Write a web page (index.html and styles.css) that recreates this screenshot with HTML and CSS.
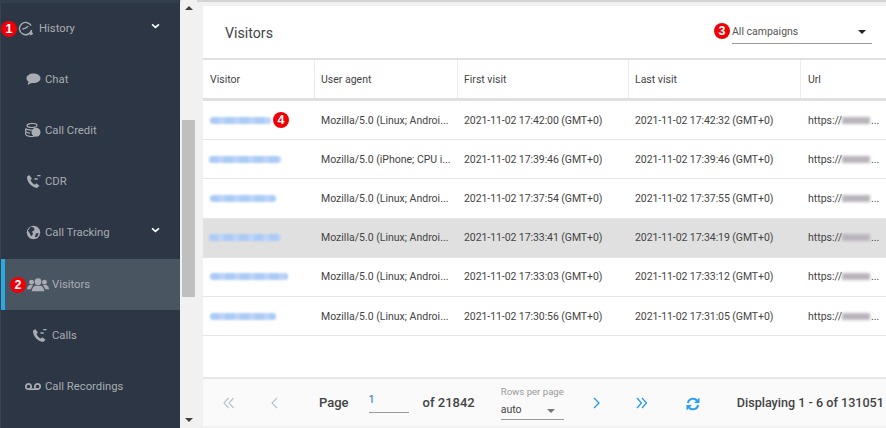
FILE: index.html
```html
<!DOCTYPE html>
<html lang="en">
<head>
<meta charset="utf-8">
<title>Visitors</title>
<link rel="stylesheet" href="styles.css">
</head>
<body>
<div class="app">
  <nav class="sidebar">
    <a class="item lvl0"><svg class="ico" viewBox="0 0 16 16"><path d="M14.6 9.6A6.6 6.6 0 1 1 14 5" fill="none" stroke="currentColor" stroke-width="1.5"/><path d="M4.6 8.6 8 7.6l3-2" fill="none" stroke="currentColor" stroke-width="1.4"/><path d="M11 13.5h4.2M13 11l2.500 2.500-2.500 1.500" fill="none" stroke="currentColor" stroke-width="1.2"/></svg><span>History</span><svg class="chev" viewBox="0 0 10 7"><path d="M1 1.500 5 5.200 9 1.500" fill="none" stroke="#fff" stroke-width="2"/></svg><b class="badge b1">1</b></a>
    <a class="item lvl1"><svg class="ico" viewBox="0 0 15 14"><path d="M7.500 1C11.400 1 14.500 3.100 14.500 5.800S11.400 10.600 7.500 10.600C6.800 10.600 6.200 10.500 5.600 10.400L1.500 12.600 2.600 9.300C1.300 8.400.5 7.200.5 5.800.5 3.100 3.600 1 7.500 1Z" fill="currentColor"/></svg><span>Chat</span></a>
    <a class="item lvl1"><svg class="ico big" viewBox="0 0 16 15"><g fill="none" stroke="currentColor" stroke-width="1.200"><ellipse cx="7" cy="2.500" rx="5" ry="2"/><path d="M1 5.600C2 7 6 7.300 7 7M1 8.700c1 1.200 3 1.500 4 1.500M1 11.800c1 1.500 6 2 8 1.500M1 5.600C.4 6.700.4 7.600 1 8.700.4 9.700.4 10.800 1 11.800"/></g><circle cx="11" cy="9.300" r="4.500" fill="currentColor"/></svg><span>Call Credit</span></a>
    <a class="item lvl1"><svg class="ico" viewBox="0 0 16 16"><path d="M3.400 1 1 3c0 6 5 11 10.900 12l2.400-2.600-3.300-2.500-1.700 1.500C7.300 10.400 5.700 8.600 4.800 6.400l1.500-1.600Z" fill="currentColor"/><path d="M9 5.300h3.500M12 1.800h3.500" stroke="currentColor" stroke-width="1.400"/></svg><span>CDR</span></a>
    <a class="item lvl1 tracking"><svg class="ico" viewBox="0 0 16 16"><circle cx="8" cy="8" r="7.200" fill="currentColor"/><path d="M5 1.600 8.500 3 9 5.500 6.500 7 7.500 9.500 5.500 12 3.500 8 2 6ZM10.500 9l3-.5-1.500 4-2.500.5Z" fill="#2c3644"/></svg><span>Call Tracking</span><svg class="chev" viewBox="0 0 10 7"><path d="M1 1.500 5 5.200 9 1.500" fill="none" stroke="#fff" stroke-width="2"/></svg></a>
    <a class="item lvl2 active"><svg class="ico wide" viewBox="0 0 21 13"><g fill="currentColor"><circle cx="10.500" cy="3.300" r="3.200"/><path d="M4.500 12.500c.3-3 2-5 3.500-5.300h5c1.500.3 3.200 2.300 3.500 5.300Z"/><circle cx="4.300" cy="3.800" r="2.300"/><circle cx="16.700" cy="3.800" r="2.300"/><path d="M0 10.500c.2-2.200 1.400-3.700 2.500-4h3.200L3.500 10.500ZM21 10.500c-.2-2.200-1.400-3.700-2.500-4h-3.200l2.200 4Z"/></g></svg><span>Visitors</span><b class="badge b2">2</b></a>
    <a class="item lvl2"><svg class="ico" viewBox="0 0 16 16"><path d="M3.400 1 1 3c0 6 5 11 10.900 12l2.400-2.600-3.300-2.500-1.700 1.500C7.300 10.400 5.700 8.600 4.800 6.400l1.500-1.600Z" fill="currentColor"/><path d="M9 5.300h3.500M12 1.800h3.500" stroke="currentColor" stroke-width="1.400"/></svg><span>Calls</span></a>
    <a class="item lvl1"><svg class="ico big" viewBox="0 0 16 8"><g fill="none" stroke="currentColor" stroke-width="1.700"><circle cx="3.500" cy="4" r="2.700"/><circle cx="12.500" cy="4" r="2.700"/><path d="M3.500 6.700h9"/></g></svg><span>Call Recordings</span></a>
  </nav>
  <div class="scrollbar">
    <i class="arrow up"></i>
    <div class="track"><div class="thumb"></div></div>
    <i class="arrow down"></i>
  </div>
  <main class="panel">
    <header class="head">
      <h1>Visitors</h1>
      <div class="select"><span>All campaigns</span><i class="caret"></i><b class="badge b3">3</b></div>
    </header>
    <div class="row hdr">
      <div>Visitor</div><div>User agent</div><div>First visit</div><div>Last visit</div><div>Url</div>
    </div>
    <div class="row"><div><span class="redact w1"></span><b class="badge b4">4</b></div><div>Mozilla/5.0 (Linux; Androi...</div><div>2021-11-02 17:42:00 (GMT+0)</div><div>2021-11-02 17:42:32 (GMT+0)</div><div class="url">https://<span class="smear"></span>...</div></div>
    <div class="row"><div><span class="redact w2"></span></div><div>Mozilla/5.0 (iPhone; CPU i...</div><div>2021-11-02 17:39:46 (GMT+0)</div><div>2021-11-02 17:39:46 (GMT+0)</div><div class="url">https://<span class="smear"></span>...</div></div>
    <div class="row"><div><span class="redact w3"></span></div><div>Mozilla/5.0 (Linux; Androi...</div><div>2021-11-02 17:37:54 (GMT+0)</div><div>2021-11-02 17:37:55 (GMT+0)</div><div class="url">https://<span class="smear"></span>...</div></div>
    <div class="row sel"><div><span class="redact w2"></span></div><div>Mozilla/5.0 (Linux; Androi...</div><div>2021-11-02 17:33:41 (GMT+0)</div><div>2021-11-02 17:34:19 (GMT+0)</div><div class="url">https://<span class="smear"></span>...</div></div>
    <div class="row"><div><span class="redact w4"></span></div><div>Mozilla/5.0 (Linux; Androi...</div><div>2021-11-02 17:33:03 (GMT+0)</div><div>2021-11-02 17:33:12 (GMT+0)</div><div class="url">https://<span class="smear"></span>...</div></div>
    <div class="row"><div><span class="redact w3"></span></div><div>Mozilla/5.0 (Linux; Androi...</div><div>2021-11-02 17:30:56 (GMT+0)</div><div>2021-11-02 17:31:05 (GMT+0)</div><div class="url">https://<span class="smear"></span>...</div></div>
    <div class="spacer"></div>
    <footer class="pager">
      <svg class="pg first" viewBox="0 0 12 12"><path d="M5.500 1 1 6l4.500 5M10.500 1 6 6l4.500 5" fill="none" stroke="#bcc2c8" stroke-width="1.200"/></svg>
      <svg class="pg prev" viewBox="0 0 7 12"><path d="M6 1 1 6l5 5" fill="none" stroke="#bcc2c8" stroke-width="1.200"/></svg>
      <strong class="page-label">Page</strong>
      <span class="page-input">1</span>
      <strong class="page-of">of 21842</strong>
      <div class="rows">
        <label>Rows per page</label>
        <div class="rows-val"><span>auto</span><i class="caret grey"></i></div>
      </div>
      <svg class="pg next" viewBox="0 0 7 12"><path d="M1 1l5 5-5 5" fill="none" stroke="#2196f3" stroke-width="1.300"/></svg>
      <svg class="pg last" viewBox="0 0 12 12"><path d="M1 1l4.500 5L1 11M6 1l4.500 5L6 11" fill="none" stroke="#2196f3" stroke-width="1.200"/></svg>
      <svg class="refresh" viewBox="0 0 14 14"><g fill="none" stroke="#29a0f0" stroke-width="2"><path d="M1.800 6A5.300 5.300 0 0 1 11 3.500"/><path d="M12.200 8A5.300 5.300 0 0 1 3 10.500"/></g><path d="M13.500.5V6H8ZM.5 13.500V8H6Z" fill="#29a0f0"/></svg>
      <strong class="display">Displaying 1 - 6 of 131051</strong>
    </footer>
  </main>
</div>
</body>
</html>
```

FILE: styles.css
```css
* { box-sizing: border-box; }
html, body { margin: 0; height: 100%; overflow: hidden; }
body { font-family: Roboto, "Liberation Sans", sans-serif; background: #f1f1f1; color: #444; }
.app { display: flex; width: 886px; height: 428px; border-top: 2px solid #d4d4d4; }

.sidebar { width: 180px; flex: none; margin-top: -2px; background: #2c3644; border-left: 1px solid #3a4250; border-top: 3px solid #333e4c; display: flex; flex-direction: column; }
.item { position: relative; display: flex; align-items: center; height: 51px; color: #a9adb3; font-size: 11.3px; flex: none; }
.item:nth-child(6) { margin-top: 1px; }
.item span { line-height: 14px; }
.tracking span { margin-top: 1px; }
.lvl0 { padding-left: 17px; }
.lvl1 { padding-left: 24px; }
.lvl2 { padding-left: 30px; }
.ico { width: 15px; height: 15px; margin: 0 4px 0 1px; flex: none; }
.ico.big { width: 16px; margin: 0 4px 0 0; }
.lvl0 .ico { margin: 0 6px 0 0; }
.lvl2 .ico { margin: 0 5px 0 1px; }
.lvl2 .ico.wide { width: 22px; height: 14px; margin: 0 3px 0 -4px; }
.chev { position: absolute; left: 150px; top: 20px; width: 9px; height: 6px; }
.active { background: #4a5562; border-left: 4px solid #29abe2; padding-left: 26px; }

.badge { position: absolute; z-index: 2; width: 16px; height: 16px; border-radius: 50%; background: #f00006; color: #fff; font: 700 12.500px/16px "Liberation Sans", sans-serif; text-align: center; }
.b1 { left: 0; top: 18px; }
.b2 { left: 5px; top: 18px; }
.b3 { left: -18px; top: 0; }
.b4 { left: 70px; top: -5px; }

.scrollbar { width: 16px; margin: -2px 0 0 1px; flex: none; background: #f1f1f1; display: flex; flex-direction: column; align-items: center; }
.track { flex: 1; width: 100%; padding-top: 104px; }
.thumb { width: 13px; height: 177px; margin-left: 1px; background: #bfbfbf; }
.arrow { width: 0; height: 0; border-left: 4px solid transparent; border-right: 4px solid transparent; margin: 6px 0; }
.arrow.up { border-bottom: 4px solid #404040; }
.arrow.down { border-top: 4px solid #404040; margin-top: 9px; }

.panel { margin: 4px 0 0 6px; height: 420px; width: 683px; flex: none; background: #fff; display: flex; flex-direction: column; overflow: hidden; }
.head { height: 52px; display: flex; align-items: center; justify-content: space-between; padding: 2px 14px 0 22px; flex: none; }
.head h1 { margin: 0; font-size: 14.200px; font-weight: 400; color: #444; }
.select { position: relative; width: 140px; height: 21px; padding-top: 1px; border-bottom: 1px solid #999; font-size: 10.500px; line-height: 15px; color: #555; display: flex; justify-content: space-between; }
.caret { width: 0; height: 0; border-left: 4px solid transparent; border-right: 4px solid transparent; border-top: 4px solid #222; margin: 6px 6px 0 0; }
.caret.grey { border-left-width: 4px; border-right-width: 4px; border-top: 4px solid #777; margin: 3px 0 0; }

.row { position: relative; display: grid; grid-template-columns: 112px 143px 171px 172px 85px; height: 39.200px; flex: none; align-items: center; border-bottom: 1px solid #e6e6e6; font-size: 10.500px; color: #444; white-space: nowrap; }
.row > div { position: relative; padding-left: 6px; }
.row > div:first-child, .row > div:last-child { padding-left: 7px; }
.row:not(.hdr) > div:nth-child(3), .row:not(.hdr) > div:nth-child(4) { letter-spacing: -0.07px; }
.hdr { height: 43px; border-top: 2px solid #e0e0e0; border-bottom: 3px solid #e0e0e0; align-items: stretch; }
.hdr > div { display: flex; align-items: center; border-right: 1px solid #ececec; }
.hdr > div:last-child { border-right: 0; }
.sel { background: #e0e0e0; }
.redact { display: block; height: 7px; border-radius: 3px; background: repeating-linear-gradient(90deg, #abcbf6 0 9px, #bcd4f7 9px 15px); filter: blur(1.200px); }
.w1 { width: 61px; }
.w2 { width: 72px; margin-left: -1px; }
.w3 { width: 66px; }
.w4 { width: 78px; }
.url { display: flex; align-items: center; }
.smear { display: block; width: 28px; height: 7px; background: #b9b4bb; filter: blur(1.500px); margin-right: 1px; }

.spacer { flex: 1; }
.pager { position: relative; height: 49px; flex: none; display: flex; align-items: center; background: #fafafa; border-top: 2px solid #e6e6e6; font-size: 13px; color: #444; white-space: nowrap; overflow: hidden; }
.pager > * { flex: none; }
.pager strong { font-weight: 500; }
.pg { height: 12px; }
.first { width: 12px; margin-left: 20px; }
.prev { width: 7px; margin-left: 36px; }
.page-label { margin-left: 41px; }
.page-input { width: 40px; margin-left: 20px; height: 21px; border-bottom: 1px solid #999; font-size: 11px; line-height: 16px; color: #1976d2; }
.page-of { margin-left: 14px; }
.rows { width: 63px; margin-left: 26px; }
.rows label { display: block; font-size: 9.600px; line-height: 12px; color: #999; white-space: nowrap; margin-bottom: 2px; }
.rows-val { display: flex; justify-content: space-between; align-items: center; height: 20px; border-bottom: 1px solid #999; font-size: 10.500px; padding-right: 9px; }
.next { width: 7px; margin-left: 29px; }
.last { width: 12px; margin-left: 36px; }
.refresh { width: 14px; height: 14px; margin: 3px 0 0 38px; }
.pager .display { margin-left: 37px; font-size: 12.600px; }
```
